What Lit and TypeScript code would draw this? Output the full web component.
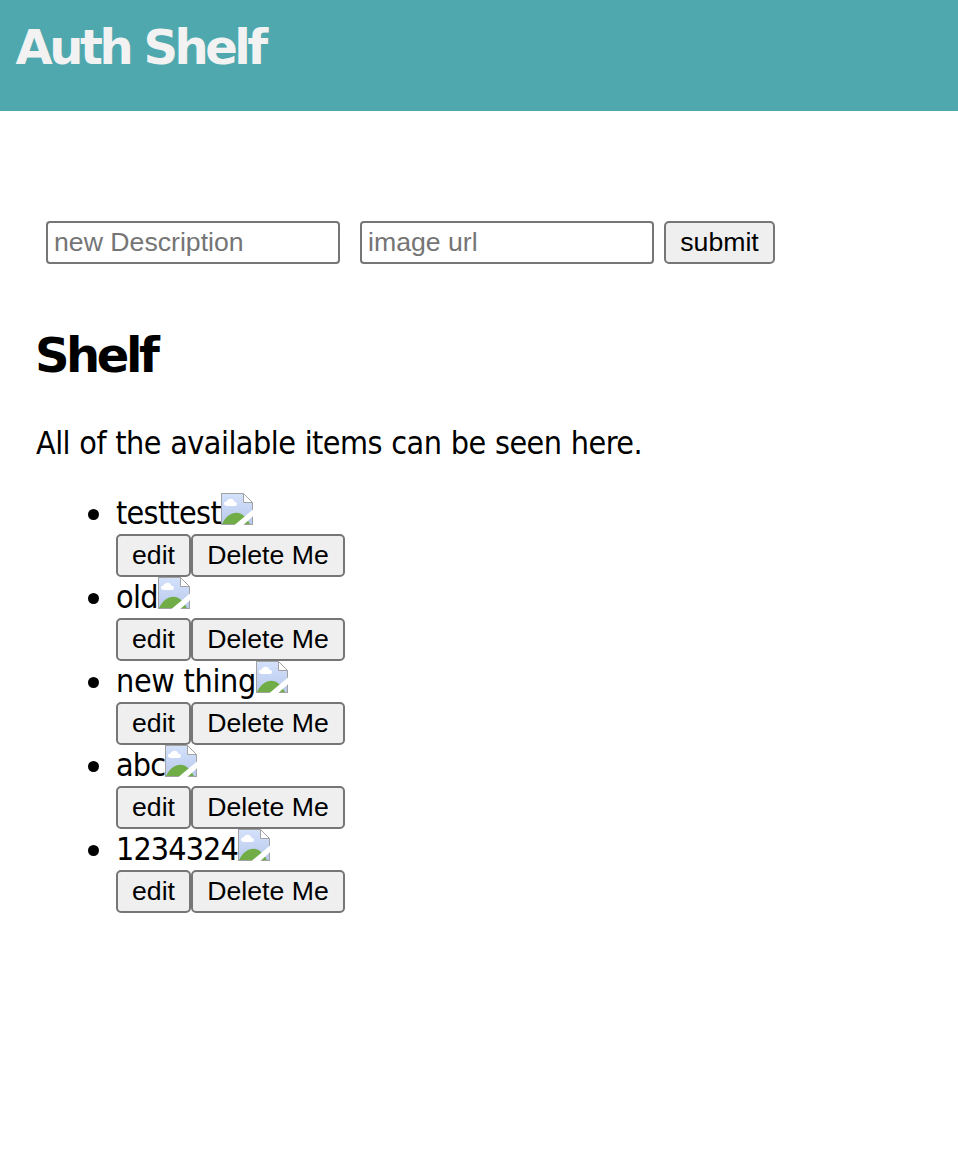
import { LitElement, html, css } from "lit";
import { customElement, property } from "lit/decorators.js";

interface ShelfItem {
  description: string;
  width: number;
  tracking: number;
}

@customElement("missing-picture")
export class MissingPicture extends LitElement {
  static styles = css`
    :host { display: block; width: 32px; height: 32px; flex: none; }
    .icon { display: block; }
  `;
  render() {
    return html`<svg class="icon" width="32" height="32" viewBox="0 0 32 32">
      <defs>
        <linearGradient id="sky" x1="0" y1="0" x2="0" y2="1">
          <stop offset="0" stop-color="#d3e1fb" />
          <stop offset="1" stop-color="#b9c9ec" />
        </linearGradient>
      </defs>
      <path d="M0 0H23L32 9V32H0Z" fill="#a2a2a2" />
      <path d="M1 1H22.5L31 9.5V31H1Z" fill="url(#sky)" />
      <path d="M1 31C4.500 24 9.500 19.800 15.500 19.800C21 19.800 25 24 29 31Z" fill="#70ad47" />
      <path d="M6 13C4 13 3 11.800 3 10.500C3 9.200 4 8.400 5.500 8.400C6.200 6.800 7.800 5.800 9.600 5.800C11.600 5.800 13 7 13.400 8.800C15.200 8.800 16 9.900 16 11C16 12.200 15.200 13 13.800 13Z" fill="#fff" />
      <path d="M22.500 0V9.500H32V0Z" fill="#fff" />
      <path d="M22.500 .5V9.500H31.500Z" fill="#fff" stroke="#a2a2a2" />
      <path d="M32 16.500V23.300L22.300 32H13.500Z" fill="#fff" />
    </svg>`;
  }
}

@customElement("shelf-row")
export class ShelfRow extends LitElement {
  @property({ attribute: false }) item!: ShelfItem;
  static styles = css`
    :host { display: block; height: 84px; }
    .line { display: flex; height: 41px; align-items: flex-start; }
    .bullet { flex: none; width: 11px; height: 11px; border-radius: 50%; background: #000; margin: 16px 17px 0 -28px; }
    .text { flex: none; line-height: 41px; white-space: nowrap; }
    .actions { display: flex; }
    .btn {
      box-sizing: border-box; height: 43px; margin: 0; padding: 0 0 2px;
      border: 2px solid #767676; border-radius: 5px; background: #efefef; color: #000;
      font: 26.667px/30px "Liberation Sans", Arial, sans-serif; white-space: nowrap;
    }
    .edit { width: 75px; }
    .delete { width: 154px; }
  `;
  render() {
    const { description, width, tracking } = this.item;
    return html`
      <div class="line">
        <span class="bullet"></span>
        <span class="text" style="width:${width}px;letter-spacing:${tracking}px">${description}</span>
        <missing-picture></missing-picture>
      </div>
      <div class="actions">
        <button class="btn edit">edit</button><button class="btn delete">Delete Me</button>
      </div>
    `;
  }
}

@customElement("app-root")
export class AppRoot extends LitElement {
  static styles = css`
    :host {
      display: block; height: 1150px; background: #fff; color: #000; overflow: hidden;
      font: 32px/38px Tahoma, "DejaVu Sans Condensed", "DejaVu Sans", sans-serif;
      font-stretch: condensed;
    }
    .header { box-sizing: border-box; height: 111px; padding: 18px 16px 0; background: #4fa8ae; color: #f2f2f2; }
    .title, .heading {
      font: 700 48px/58px Tahoma, "DejaVu Sans", sans-serif; font-stretch: normal;
      letter-spacing: -3.45px; white-space: nowrap;
    }
    .title { margin: 0 0 0 -0.5px; }
    .main { padding: 110px 36px 0; }
    .form { display: flex; padding-left: 10px; height: 43px; }
    .field {
      box-sizing: border-box; width: 294px; height: 43px; margin: 0 20px 0 0; padding: 0 6px;
      border: 2px solid #767676; border-radius: 4px; background: #fff;
      font: 26.667px/30px "Liberation Sans", Arial, sans-serif;
    }
    .field:nth-of-type(2) { margin-right: 10px; }
    .field::placeholder { color: #757575; }
    .submit {
      box-sizing: border-box; width: 111px; height: 43px; margin: 0; padding: 0 0 2px;
      border: 2px solid #767676; border-radius: 5px; background: #efefef; color: #000;
      font: 26.667px/30px "Liberation Sans", Arial, sans-serif;
    }
    .heading { margin: 62px 0 0 -1px; }
    .intro { margin: 40px 0 31px; letter-spacing: -0.54px; word-spacing: 0.7px; white-space: nowrap; }
    .list { padding-left: 80px; }
  `;
  private items: ShelfItem[] = [
    { description: "testtest", width: 105, tracking: -0.7 },
    { description: "old", width: 42, tracking: -0.7 },
    { description: "new thing", width: 140, tracking: -0.3 },
    { description: "abc", width: 49, tracking: -0.8 },
    { description: "1234324", width: 122, tracking: -0.9 },
  ];
  render() {
    return html`
      <header class="header"><h1 class="title">Auth Shelf</h1></header>
      <main class="main">
        <div class="form">
          <input class="field" placeholder="new Description" />
          <input class="field" placeholder="image url" />
          <button class="submit">submit</button>
        </div>
        <h2 class="heading">Shelf</h2>
        <p class="intro">All of the available items can be seen here.</p>
        <div class="list">${this.items.map((item) => html`<shelf-row .item=${item}></shelf-row>`)}</div>
      </main>
    `;
  }
}
